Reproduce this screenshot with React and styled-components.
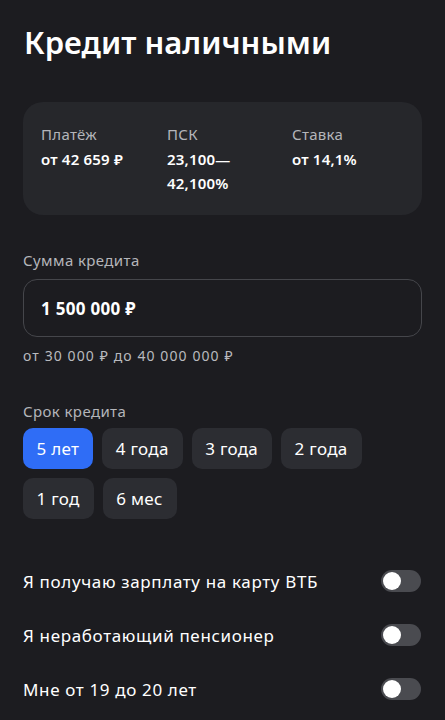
import React from "react";
import styled, { createGlobalStyle } from "styled-components";

const Global = createGlobalStyle`
  html, body { margin: 0; padding: 0; background: #1c1c20; }
  body { font-family: "Noto Sans", "Open Sans", sans-serif; color: #fff; }
  * { box-sizing: border-box; }
`;

const Page = styled.div`
  width: 445px;
  height: 720px;
  overflow: hidden;
  background: #1c1c20;
  padding: 21px 23px 0 23px;
`;

const Title = styled.h1`
  margin: 0 0 0 1px;
  font-size: 31px;
  font-weight: 600;
  line-height: 42px;
  letter-spacing: 0;
`;

const InfoCard = styled.div`
  margin-top: 39px;
  background: #26272b;
  border-radius: 20px;
  height: 113px;
  padding: 21px 18px 0 18px;
  display: grid;
  grid-template-columns: 126px 125px 1fr;
`;

const InfoItem = styled.div`
  display: flex;
  flex-direction: column;
`;

const InfoLabel = styled.div`
  font-size: 15px;
  line-height: 22px;
  color: #b4b5ba;
  letter-spacing: 0.3px;
`;

const InfoValue = styled.div`
  margin-top: 2px;
  font-size: 15px;
  font-weight: 600;
  line-height: 24px;
  letter-spacing: 0.2px;
`;

const FieldLabel = styled.div`
  font-size: 15px;
  line-height: 22px;
  color: #b4b5ba;
  letter-spacing: 0.4px;
  margin-top: ${(p) => p.top}px;
`;

const AmountBox = styled.div`
  margin-top: 8px;
  height: 58px;
  border: 1px solid #45464b;
  border-radius: 14px;
  display: flex;
  align-items: center;
  padding-left: 17px;
  font-size: 17px;
  font-weight: 700;
  letter-spacing: 0.3px;
`;

const Hint = styled.div`
  margin-top: 9px;
  font-size: 14px;
  line-height: 20px;
  color: #b9babf;
  letter-spacing: 1.1px;
`;

const Chips = styled.div`
  margin-top: 6px;
  display: flex;
  flex-wrap: wrap;
  gap: 9px 9px;
  width: 360px;
`;

const Chip = styled.div`
  height: 41px;
  padding: 0 14px 0 13.5px;
  border-radius: 10px;
  display: flex;
  align-items: center;
  font-size: 17px;
  letter-spacing: 0.3px;
  background: ${(p) => (p.active ? "#2f6df6" : "#2c2d32")};
  color: #fff;
`;

const Options = styled.div`
  margin-top: 35px;
  display: flex;
  flex-direction: column;
`;

const OptionRow = styled.div`
  height: 54px;
  display: flex;
  align-items: center;
  justify-content: space-between;
  font-size: 17px;
  letter-spacing: 0.65px;
`;

const Toggle = styled.div`
  width: 40px;
  height: 22px;
  border-radius: 11px;
  background: #4a4b50;
  padding: 2px;
  display: flex;
  align-items: center;
  margin-right: 1px;
`;

const Knob = styled.div`
  width: 18px;
  height: 18px;
  border-radius: 50%;
  background: #fff;
`;

const terms = ["5 лет", "4 года", "3 года", "2 года", "1 год", "6 мес"];
const options = [
  "Я получаю зарплату на карту ВТБ",
  "Я неработающий пенсионер",
  "Мне от 19 до 20 лет",
];

export default function App() {
  return (
    <>
      <Global />
      <Page>
        <Title>Кредит наличными</Title>
        <InfoCard>
          <InfoItem>
            <InfoLabel>Платёж</InfoLabel>
            <InfoValue>от 42 659 ₽</InfoValue>
          </InfoItem>
          <InfoItem>
            <InfoLabel>ПСК</InfoLabel>
            <InfoValue>
              23,100—
              <br />
              42,100%
            </InfoValue>
          </InfoItem>
          <InfoItem>
            <InfoLabel>Ставка</InfoLabel>
            <InfoValue>от 14,1%</InfoValue>
          </InfoItem>
        </InfoCard>

        <FieldLabel top={34}>Сумма кредита</FieldLabel>
        <AmountBox>1 500 000 ₽</AmountBox>
        <Hint>от 30 000 ₽ до 40 000 000 ₽</Hint>

        <FieldLabel top={34}>Срок кредита</FieldLabel>
        <Chips>
          {terms.map((t, i) => (
            <Chip key={t} active={i === 0}>
              {t}
            </Chip>
          ))}
        </Chips>

        <Options>
          {options.map((o) => (
            <OptionRow key={o}>
              <span>{o}</span>
              <Toggle>
                <Knob />
              </Toggle>
            </OptionRow>
          ))}
        </Options>
      </Page>
    </>
  );
}
